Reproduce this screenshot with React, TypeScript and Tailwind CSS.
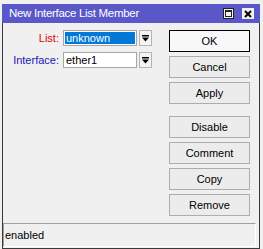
import React from 'react';

const font = { fontFamily: '"Liberation Sans", Arial, sans-serif' };

const DropIcon = () => (
  <svg width="7" height="7" viewBox="0 0 7 7">
    <rect x="0" y="0" width="7" height="1.5" fill="#000" />
    <path d="M0 2.5 H7 L3.5 6.5 Z" fill="#000" />
  </svg>
);

const Field = ({ label, color, value, selected }: { label: string; color: string; value: string; selected?: boolean }) => (
  <div className="flex items-center h-[16px]">
    <span className={`w-[57px] text-right pr-[1px] text-[11px] ${color}`}>{label}</span>
    <div className="ml-[3px] w-[74px] h-[16px] bg-white border border-[#a5a5a5] p-[1px] flex">
      <div className={`flex-1 flex items-center pl-[1px] text-[11px] leading-none ${selected ? 'bg-[#0078d7] text-white' : 'text-black'}`}>
        {value}
      </div>
    </div>
    <div className="ml-[2px] w-[13px] h-[16px] bg-[#f4f4f4] border border-[#b4b4b4] flex items-center justify-center">
      <DropIcon />
    </div>
  </div>
);

const Btn = ({ children, primary }: { children: React.ReactNode; primary?: boolean }) => (
  <div
    className={`w-[81px] h-[22px] flex items-center justify-center text-[11px] text-black ${
      primary ? 'bg-[#f8f8f8] border border-black' : 'bg-[#ececec] border border-[#adadad]'
    }`}
  >
    {children}
  </div>
);

export default function App() {
  return (
    <div className="w-[263px] h-[249px] bg-[#f0f0f0] pt-[4px] pl-[2px] overflow-hidden" style={font}>
      <div className="w-[258px] h-[245px] flex flex-col">
        {/* Title bar */}
        <div className="h-[22px] bg-[#5a58c8] flex items-center pl-[7px] pr-[6px]">
          <span className="text-white text-[11.5px] tracking-[-0.3px] flex-1 pt-[1px]">New Interface List Member</span>
          <div className="w-[11px] h-[11px] bg-[#f2f2f2] border border-[#222] flex items-center justify-center">
            <div className="w-[7px] h-[7px] border border-[#222] border-t-2" />
          </div>
          <div className="ml-[8px] w-[12px] h-[11px] bg-[#f2f2f2] flex items-center justify-center">
            <svg width="8" height="8" viewBox="0 0 8 8">
              <path d="M1 1 L7 7 M7 1 L1 7" stroke="#000" strokeWidth="2" />
            </svg>
          </div>
        </div>

        {/* Body */}
        <div className="flex-1 flex flex-col border-l border-r border-b border-[#3a3a3a]">
          <div className="flex-1 flex pt-[7px]">
            <div className="flex flex-col gap-[6px]">
              <Field label="List:" color="text-[#e00000]" value="unknown" selected />
              <Field label="Interface:" color="text-[#1818b0]" value="ether1" />
            </div>
            <div className="ml-auto mr-[9px] flex flex-col gap-[4px]">
              <Btn primary>OK</Btn>
              <Btn>Cancel</Btn>
              <Btn>Apply</Btn>
              <div className="h-[4px]" />
              <Btn>Disable</Btn>
              <Btn>Comment</Btn>
              <Btn>Copy</Btn>
              <Btn>Remove</Btn>
            </div>
          </div>
          {/* Status bar */}
          <div className="mt-[7px] mb-[1px] mr-[3px] h-[24px] border-t border-l border-[#a0a0a0] border-r-white border-b-white border-r border-b flex items-center pl-[1px] text-[11px] text-black">
            enabled
          </div>
        </div>
      </div>
    </div>
  );
}
